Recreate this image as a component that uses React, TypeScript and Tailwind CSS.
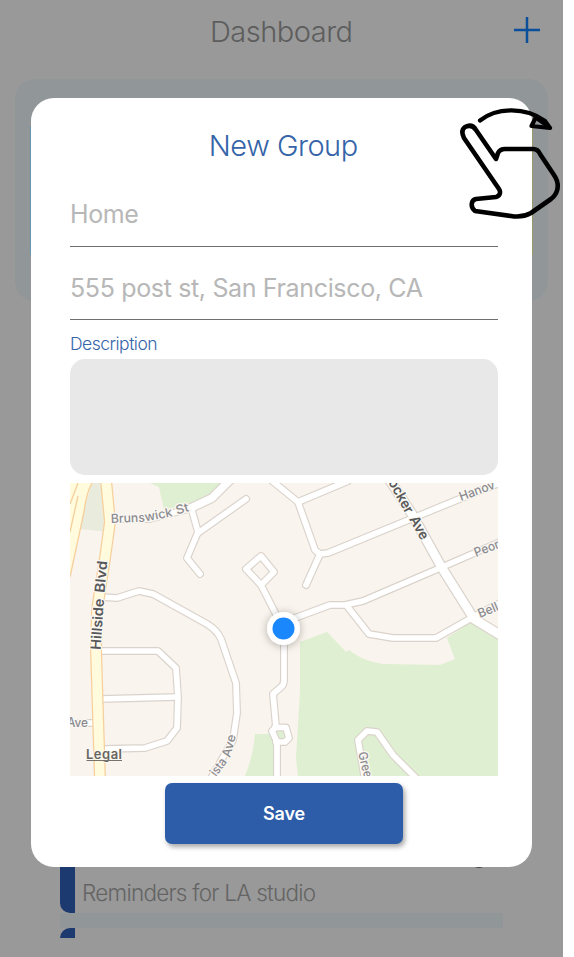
const minorRoads = [
  "M108 519H150L188 509L212 498L229 481",
  "M191 507L198 532L187 558L200 574",
  "M198 533L246 499",
  "M261 556L274 572L261 585L246 569Z",
  "M261 585L283 628",
  "M101 597L117 598L139 591L153 594L207 624Q217 630 221 639L236 683L237 713L233 740L210 780",
  "M271 480L298 502L315 550L320 554L328 553L457 500L502 482",
  "M298 502L348 481",
  "M320 554L306 585",
  "M284 622L330 605L345 605L363 601L440 568L502 541",
  "M347 606L369 634L393 638H436L475 616L502 602",
  "M284 628V680Q284 685 281 687L273 694L276 727L272 731L277 742V780",
  "M275 727.500H286L289 738L285 742H276",
  "M98 651H158L176 668L178 697L177 728L167 741L145 748L103 749",
  "M100 699L177 697",
  "M80 723H98",
  "M365 780L358 740L367 731L377 732L393 755L418 780",
];

type RoadLabelProps = {
  text: string;
  x: number;
  y: number;
  angle: number;
  length: number;
  major?: boolean;
};

function RoadLabel({ text, x, y, angle, length, major = false }: RoadLabelProps) {
  return (
    <text
      transform={`translate(${x} ${y}) rotate(${angle})`}
      textLength={length}
      lengthAdjust="spacingAndGlyphs"
      className={major ? "fill-[#58585a] text-[14px] font-semibold" : "fill-[#8b8b90] text-[12.5px] font-medium"}
      stroke="#fbf8f3"
      strokeWidth="2.5"
      strokeLinejoin="round"
      paintOrder="stroke"
    >
      {text}
    </text>
  );
}

function StreetMap() {
  return (
    <svg viewBox="70 483 428 293" className="block h-[293px] w-[428px] shrink-0" role="img" aria-label="Map">
      <defs>
        <filter id="pinShadow" x="-50%" y="-50%" width="200%" height="200%">
          <feDropShadow dx="0" dy="1" stdDeviation="4" floodColor="#000" floodOpacity="0.3" />
        </filter>
      </defs>
      <path d="M70 483H498V776H70Z" fill="#f9f4ed" />
      <path d="M88 483H106L109 532L80 529Z" fill="#e9ebdc" />
      <path d="M150 483L159 487L164 510L188 504L210 495L222 483Z" fill="#dfefd1" />
      <path d="M300 642L327 632L346 652L349 650Q362 661 383 664L440 665L455 659L447 638L475 619L498 632V776H298L296 758L300 692Z" fill="#dfefd1" />
      <path d="M255 734H272L278 742V776H245Q253 757 255 734Z" fill="#dfefd1" />
      <path d="M276 728H286L289 738L285 742H277Z" fill="#dfefd1" />
      <path d="M70 483H92L86 502L70 577Z" fill="#fffbdc" />
      <path d="M92 483Q86 494 84 512L70 577M78 496L70 532M78 483L70 504" fill="none" stroke="#f7cf9c" strokeWidth="1.3" />
      <g fill="none" strokeLinecap="round" strokeLinejoin="round">
        <g stroke="#dad3cc" strokeWidth="8">
          {minorRoads.map((d) => <path key={d} d={d} />)}
          <path d="M389 479L412 514L442 568L474 619L502 636" strokeWidth="11" />
          <path d="M191 508L212 498L231 479" strokeWidth="10" />
        </g>
        <g stroke="#fff" strokeWidth="5.700">
          {minorRoads.map((d) => <path key={d} d={d} />)}
          <path d="M389 479L412 514L442 568L474 619L502 636" strokeWidth="8.700" />
          <path d="M191 508L212 498L231 479" strokeWidth="7.700" />
        </g>
        <path d="M106 480L110 522L105 558L97 610L96 650L100 780" stroke="#f7cf9c" strokeWidth="12" />
        <path d="M106 480L110 522L105 558L97 610L96 650L100 780" stroke="#fffbdc" strokeWidth="9.500" />
      </g>
      <g fontFamily="Inter, 'Liberation Sans', sans-serif">
        <RoadLabel text="Bruns" x={111} y={523} angle={-2} length={34} />
        <RoadLabel text="wick" x={145.500} y={521.500} angle={-11} length={28} />
        <RoadLabel text="St" x={177} y={514.500} angle={-15} length={13} />
        <RoadLabel text="Hillside" x={100.500} y={650} angle={-86} length={51} major />
        <RoadLabel text="Blvd" x={104.500} y={593} angle={-85} length={32} major />
        <RoadLabel text="ocker" x={388} y={482} angle={61} length={37} major />
        <RoadLabel text="Ave" x={409} y={519} angle={61} length={25} major />
        <RoadLabel text="Hanov" x={461} y={501} angle={-20} length={37} />
        <RoadLabel text="Peor" x={476} y={557} angle={-21} length={26} />
        <RoadLabel text="Bell" x={480} y={618} angle={-23} length={21} />
        <RoadLabel text="Ave" x={67} y={727} angle={0} length={21} />
        <RoadLabel text="ista" x={216} y={777} angle={-53} length={19} />
        <RoadLabel text="Ave" x={230} y={758} angle={-75} length={23} />
        <RoadLabel text="Gree" x={358} y={753} angle={76} length={26} />
        <text x="86" y="759" textLength="36" className="fill-[#68655f] text-[13px] font-semibold" stroke="#fbf8f3" strokeWidth="2" paintOrder="stroke">Legal</text>
        <path d="M86.500 760.500H122" stroke="#77736c" />
      </g>
      <circle cx="283.500" cy="628.500" r="16.500" fill="#fff" filter="url(#pinShadow)" />
      <circle cx="283.500" cy="628.500" r="11" fill="#1a87fc" />
    </svg>
  );
}

function SwipeHand() {
  return (
    <svg viewBox="455 100 110 125" className="absolute left-[455px] top-[100px] h-[125px] w-[110px]" fill="none" stroke="#000" strokeWidth="4.600" strokeLinecap="round" strokeLinejoin="round" aria-hidden="true">
      <path d="M480 120.500C496 108 524 106 545 121L550 128L531.500 126L535.500 118" strokeWidth="4.200" />
      <path d="M536 118L550 128" strokeWidth="3.500" />
      <path d="M496 159L476 130C473 125 469 125 465 127C461 130 462 134 464 138L499 189C501 192 500 196 496 197L476 199C471 200 470 207 475 211L511 216Q522 218 531 213L551 199Q560 192 557 181Q556 178 554 175L540 154Q538 149 533 149H505Q500 149 498 153Z" />
    </svg>
  );
}

export default function App() {
  return (
    <div className="relative h-[957px] w-[574px] overflow-hidden bg-white font-['Inter','Liberation_Sans',sans-serif]">
      <div className="flex h-full w-[562.500px] flex-col bg-[#999]">
        <header className="grid h-[79px] shrink-0 grid-cols-[40px_1fr_40px] items-start pt-3.5">
          <h1 className="col-start-2 text-center text-[29px] font-light leading-9 tracking-[-0.5px] text-[#5d5d5d]">Dashboard</h1>
          <svg viewBox="0 0 28 28" className="mt-0.5 size-7 -translate-x-2.5" stroke="#0b4f9b" strokeWidth="2.500" aria-label="Add"><path d="M1 14H27M14 1V27" /></svg>
        </header>
        <div className="mx-[15px] flex h-[222px] shrink-0 justify-between rounded-[20px] bg-[#919699] px-[14.500px] pt-[47px]">
          <div className="h-[129px] w-8 bg-[#6996ac]" />
          <div className="h-[129px] w-8 bg-[#999765]" />
        </div>
        <div className="mx-[60px] mt-auto mb-[19px] flex h-24 shrink-0 flex-col">
          <div className="flex h-[71px] shrink-0 items-end">
            <span className="h-full w-[15px] rounded-bl-[10px] bg-[#1d3a70]" />
            <span className="ml-[7px] mb-1.5 whitespace-nowrap text-[22.500px] font-light leading-7 tracking-[-0.75px] text-[#646464]">Reminders for LA studio</span>
          </div>
          <div className="h-[15px] shrink-0 bg-[#919699]" />
          <div className="h-2.5 w-[15px] rounded-tl-[10px] bg-[#1d3a70]" />
        </div>
      </div>

      <span className="absolute left-[475px] top-[862px] h-1.5 w-2 rounded-full bg-[#4d4d4d]" />
      <section className="absolute left-[31px] top-[98px] flex h-[769px] w-[500.500px] flex-col rounded-[23px] bg-white px-[39px]">
        <h2 className="mt-[30px] ml-1 h-9 self-center whitespace-nowrap text-[29px] font-light leading-9 tracking-[-0.5px] text-[#3564a9]">New Group</h2>
        <div className="mt-5 h-[63px] w-[428px] border-b border-[#707070] pt-[13px] text-[25px] leading-[34px] tracking-[-0.4px] text-[#b7b7b7]">Home</div>
        <div className="h-[73px] w-[428px] whitespace-nowrap border-b border-[#707070] pt-6 text-[25px] leading-[34px] tracking-[-0.35px] text-[#b7b7b7]">555 post st, San Francisco, CA</div>
        <label className="mt-[11px] h-7 text-[17.500px] font-light leading-[26px] tracking-[-0.5px] text-[#3564a9]">Description</label>
        <div className="h-[116px] w-[428px] shrink-0 rounded-[15px] bg-[#e8e8e8]" />
        <div className="mt-2 shrink-0"><StreetMap /></div>
        <button className="mt-[7px] ml-[95px] h-[61px] w-[238px] shrink-0 rounded-[7px] bg-[#2d5da9] text-[18px] font-semibold tracking-[-0.1px] text-white shadow-[2px_3px_5px_rgba(0,0,0,0.35)]">Save</button>
      </section>
      <SwipeHand />
    </div>
  );
}
